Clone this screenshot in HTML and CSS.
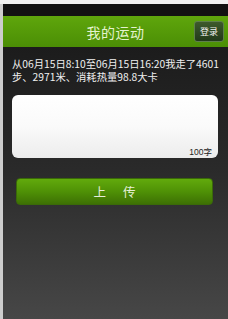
FILE: index.html
```html
<!DOCTYPE html>
<html lang="zh-CN">
<head>
    <meta charset="UTF-8">
    <meta name="viewport" content="width=device-width, initial-scale=1.0">
    <title>我的运动</title>
    <link rel="stylesheet" href="styles.css">
</head>
<body>
    <div class="topline"></div>
    <div class="app">
        <div class="statusbar"></div>
        <div class="header">
            <h3>我的运动</h3>
            <button class="login">登录</button>
        </div>
        <div class="content">
            <p class="summary">从06月15日8:10至06月15日16:20我走了4601步、2971米、消耗热量98.8大卡</p>
            <div class="note-box">
                <span class="count">100字</span>
            </div>
            <button class="upload"><span>上</span><span>传</span></button>
        </div>
    </div>
</body>
</html>
```

FILE: styles.css
```css
*{
    margin: 0;
    padding: 0;
    box-sizing: border-box;
    font-family: "Noto Sans CJK SC", "Liberation Sans", sans-serif;
}

body{
    background: #cdcdcd;
    height: 319px;
    overflow: hidden;
}

.topline{
    height: 4px;
    background: #f1f1f1;
}

.app{
    margin-left: 3px;
    height: 315px;
    display: flex;
    flex-direction: column;
}

.statusbar{
    height: 12px;
    background: #121212;
}

.header{
    height: 31px;
    display: flex;
    align-items: center;
    justify-content: center;
    position: relative;
    background: linear-gradient(to bottom, #5fa60c, #4b8e05);
}

.header h3{
    color: #e4f3cf;
    font-size: 14px;
    font-weight: normal;
    letter-spacing: 0.5px;
}

.header .login{
    position: absolute;
    right: 4px;
    top: 5px;
    width: 30px;
    height: 21px;
    border: 1px solid #5f7f4c;
    border-radius: 3px;
    background: linear-gradient(to bottom, #3d5a2c, #22391a);
    color: #f2f2f2;
    font-size: 9px;
}

.content{
    flex: 1;
    padding: 11px 6px 0 9px;
    background: linear-gradient(to bottom, #1c1c1c, #2a2a2a 45%, #474747);
}

.summary{
    color: #f0f0f0;
    font-size: 10.3px;
    line-height: 12.5px;
}

.note-box{
    margin-top: 12px;
    width: 206px;
    height: 63px;
    border-radius: 6px;
    background: linear-gradient(to bottom, #ffffff, #fafafa 50%, #ececec);
    display: flex;
    align-items: flex-end;
    justify-content: flex-end;
    padding: 0 6px 1px 0;
}

.note-box .count{
    color: #1e1e1e;
    font-size: 8.5px;
    font-family: "Liberation Sans", "Noto Sans CJK SC", sans-serif;
}

.upload{
    margin: 20px 0 0 4px;
    width: 197px;
    height: 27px;
    border: 1px solid #3a6a08;
    border-radius: 4px;
    background: linear-gradient(to bottom, #62aa0c, #4f9106 50%, #3d7004);
    color: #e6efd9;
    font-size: 12.5px;
    display: flex;
    align-items: center;
    justify-content: center;
    gap: 17px;
}
```
